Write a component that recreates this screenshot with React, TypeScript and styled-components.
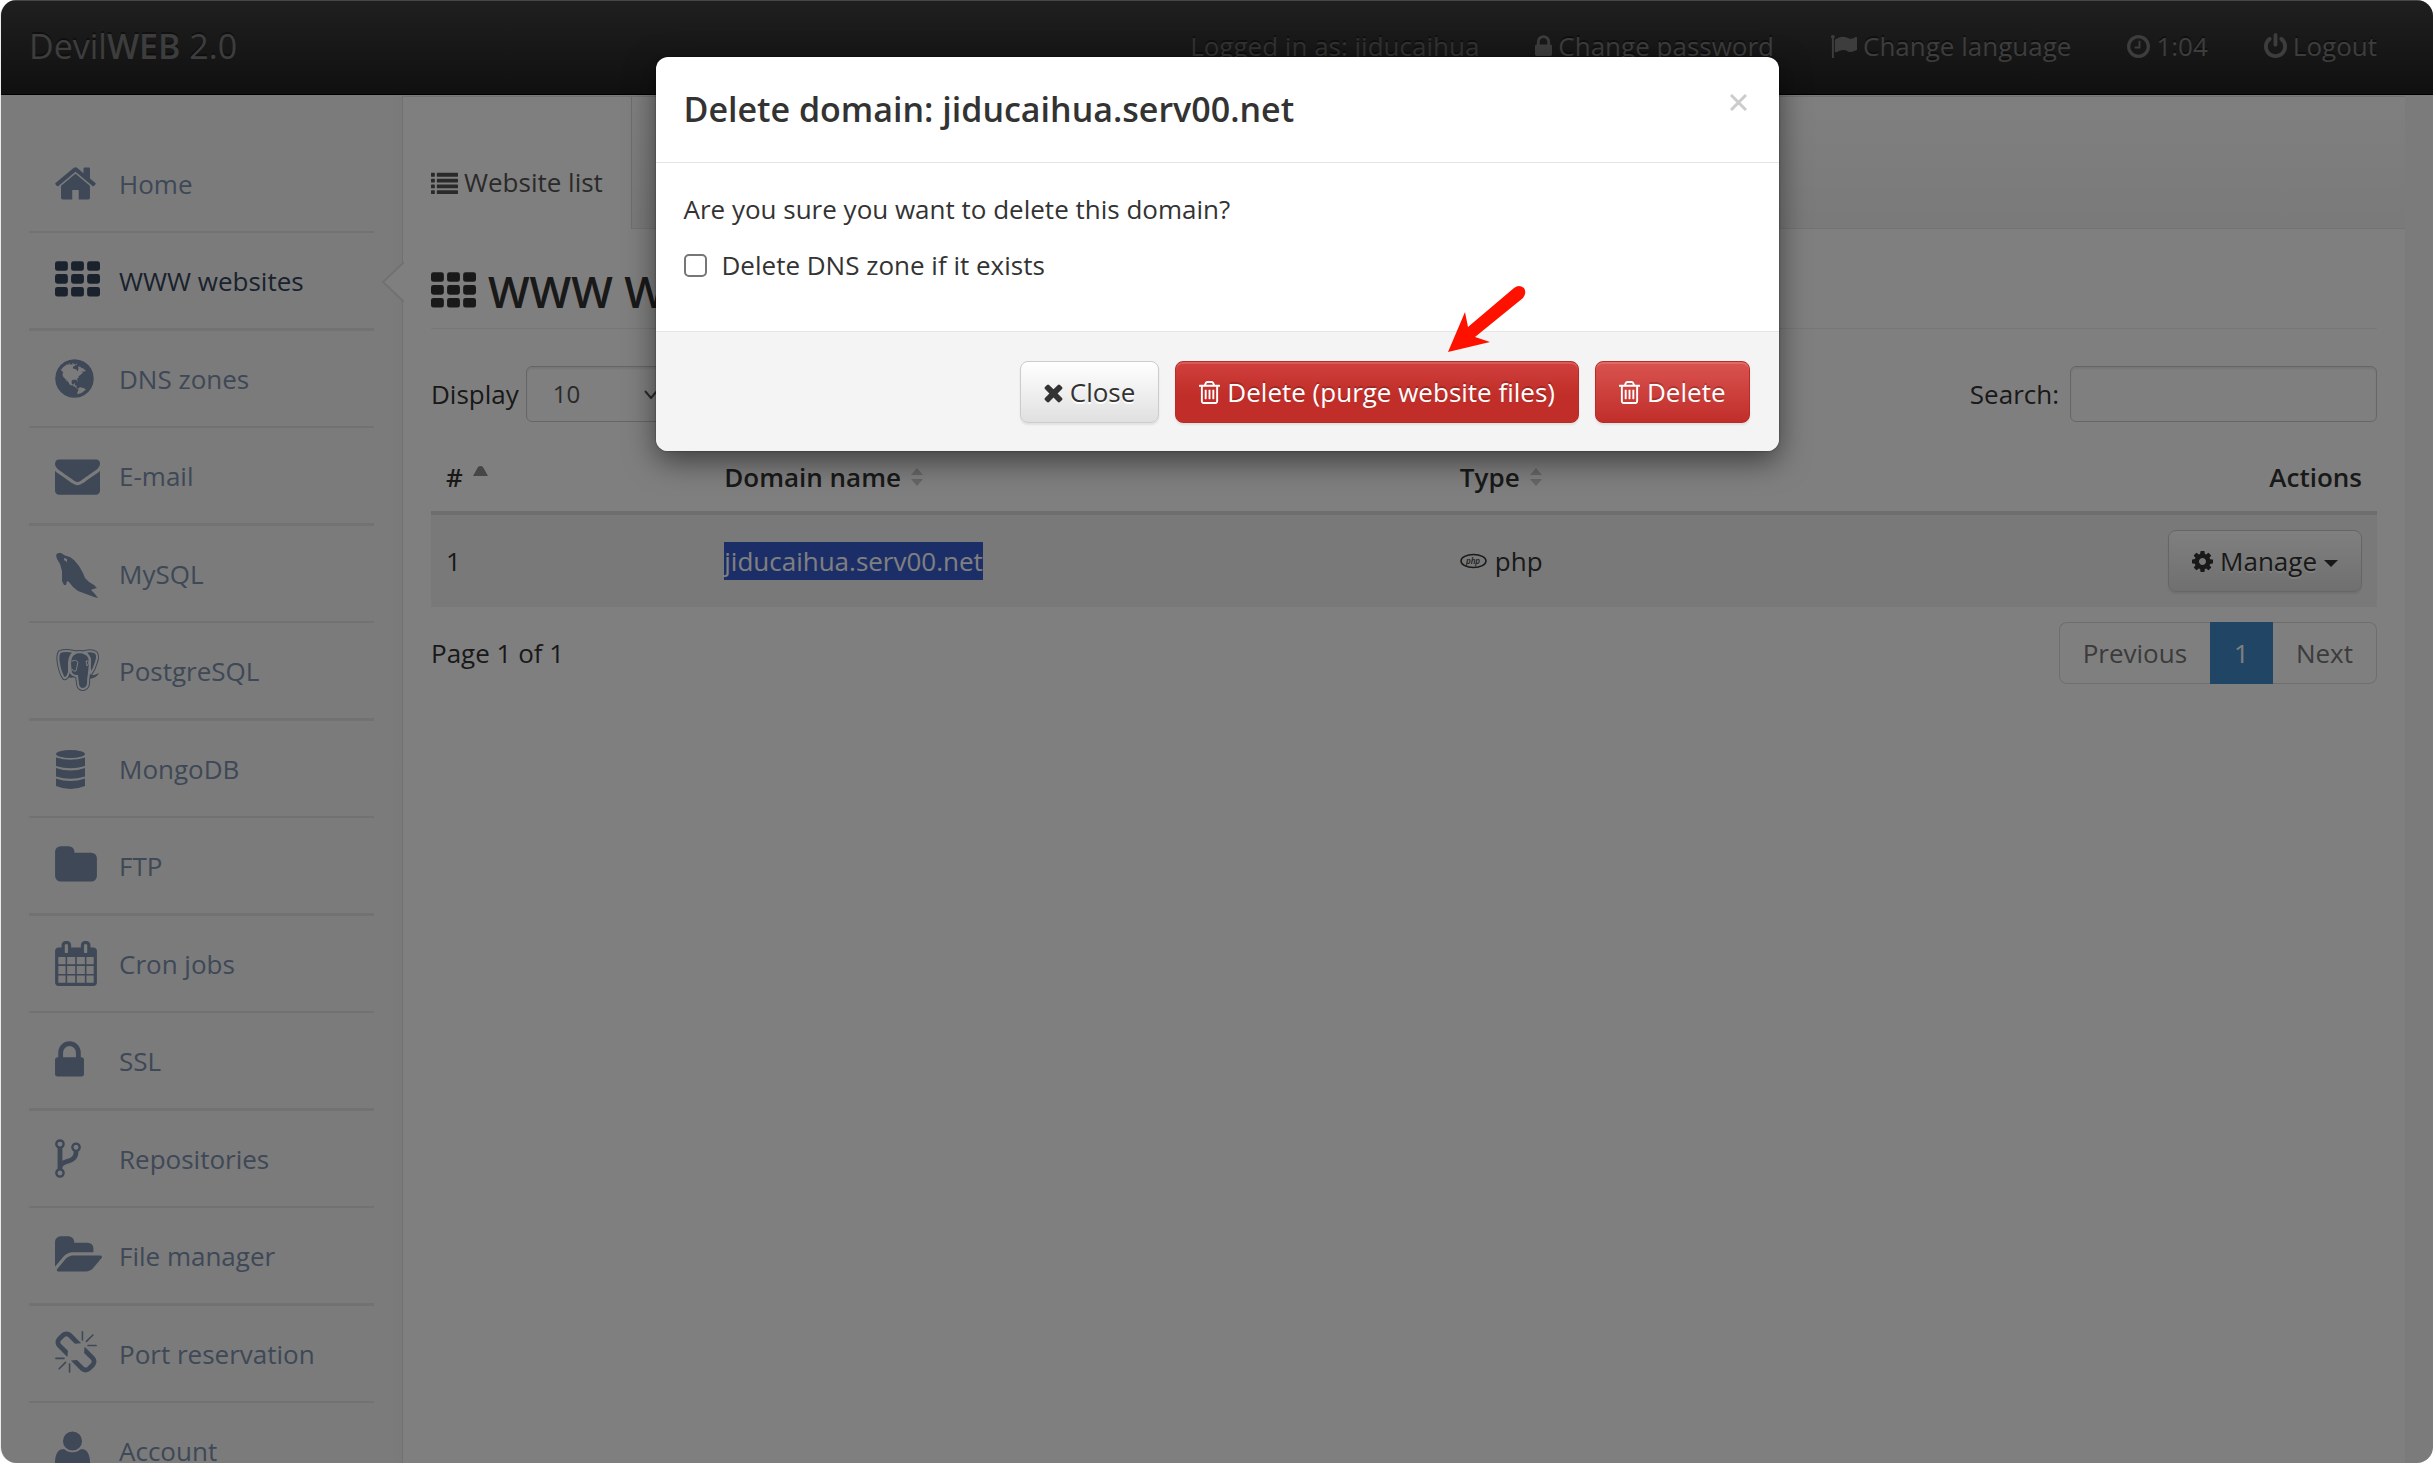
import React from "react";
import styled, { createGlobalStyle, css } from "styled-components";

const Global = createGlobalStyle`
  *, *::before, *::after { box-sizing: border-box; }
  html, body { margin: 0; height: 100%; background: #fff; }
  body, button, input, select {
    font-family: "Open Sans", "Noto Sans", sans-serif;
    font-size: 26px;
    line-height: 38px;
    color: #333;
  }
  #root { height: 100%; }
  a { color: inherit; text-decoration: none; }
`;

/* ---------- icons ---------- */

type IconDef = { x: number; w: number; d: string };

const bar = (x: number, y: number, w: number, h: number, r: number) =>
  `M${x + r} ${y}h${w - 2 * r}q${r} 0 ${r} ${r}v${h - 2 * r}q0 ${r}-${r} ${r}h-${w - 2 * r}q-${r} 0-${r}-${r}v-${h - 2 * r}q0-${r} ${r}-${r}z`;

const slot = "v576q0 14-9 23t-23 9h-64q-14 0-23-9t-9-23v-576q0-14 9-23t23-9h64q14 0 23 9t9 23z";

const glyphs: Record<string, IconDef> = {
  home: { x: 89, w: 1615, d: "M1472 992v480q0 26-19 45t-45 19h-384v-384h-256v384h-384q-26 0-45-19t-19-45v-480q0-1 .5-3t.5-3l575-474 575 474q1 2 1 6zm223-69l-62 74q-8 9-21 11h-3q-13 0-21-7l-692-577-692 577q-12 8-24 7-13-2-21-11l-62-74q-8-10-7-23.5t11-21.5l719-599q32-26 76-26t76 26l244 204v-195q0-14 9-23t23-9h192q14 0 23 9t9 23v408l219 182q10 8 11 21.5t-7 23.5z" },
  grid: { x: 0, w: 1792, d: [128, 640, 1152].map(y => [0, 640, 1280].map(x => bar(x, y, 512, 384, 96)).join("")).join("") },
  list: { x: 0, w: 1792, d: [256, 640, 1024, 1408].map(y => bar(0, y, 256, 256, 32) + bar(384, y, 1408, 256, 32)).join("") },
  globe: { x: 128, w: 1536, d: "M896 128q209 0 385.5 103t279.5 279.5 103 385.5-103 385.5-279.5 279.5-385.5 103-385.5-103-279.5-279.5-103-385.5 103-385.5 279.5-279.5 385.5-103zm274 521q-2 1-9.5 9.5t-13.5 9.5q2 0 4.5-5t5-11 3.5-7q6-7 22-15 14-6 52-12 34-8 51 11-2-2 9.5-13t14.5-12q3-2 15-4.5t15-7.5l2-22q-12 1-17.5-7t-6.5-21q0 2-6 8 0-7-4.5-8t-11.5 1-9 1q-10-3-15-7.5t-8-16.5-4-15q-2-5-9.5-11t-9.5-10q-1-2-2.5-5.5t-3-6.5-4-5.5-5.5-2.5-7 5-7.5 10-4.5 5q-3-2-6-1.5t-4.5 1-4.5 3-5 3.5q-3 2-8.5 3t-8.5 2q15-5-1-11-10-4-16-3 9-4 7.5-12t-8.5-14h5q-1-4-8.5-8.5t-17.5-8.5-13-6q-8-5-34-9.5t-33-.5q-5 6-4.5 10.5t4 14 3.5 12.5q1 6-5.5 13t-6.5 12q0 7 14 15.5t10 21.5q-3 8-16 16t-16 12q-5 8-1.5 18.5t10.5 16.5q2 2 1.5 4t-3.5 4.5-5.5 4-6.5 3.5l-3 2q-11 5-20.5-6t-13.5-26q-7-25-16-30-23-8-29 1-5-13-41-26-25-9-58-4 6-1 0-15-7-15-19-12 3-6 4-17.5t1-13.5q3-13 12-23 1-1 7-8.5t9.5-13.5.5-6q35 4 50-11 5-5 11.5-17t10.5-17q9-6 14-5.5t14.5 5.5 14.5 5q14 1 15.5-11t-7.5-20q12 1 3-17-4-7-8-9-12-4-27 5-8 4 2 8-1-1-9.5 10.5t-16.5 17.5-16-5q-1-1-5.5-13.5t-9.5-13.5q-8 0-16 15 3-8-11-15t-24-8q19-12-8-27-7-4-20.5-5t-19.5 4q-5 7-5.5 11.5t5 8 10.5 5.5 11.5 4 8.5 3q14 10 8 14-2 1-8.5 3.5t-11.5 4.5-6 4q-3 4 0 14t-2 14q-5-5-9-17.5t-7-16.5q7 9-25 6l-10-1q-4 0-16 2t-20.5 1-13.5-8q-4-8 0-20 1-4 4-2-4-3-11-9.5t-10-8.5q-46 15-94 41 6 1 12-1 5-2 13-6.5t10-5.5q34-14 42-7l5-5q14 16 20 25-7-4-30-1-20 6-22 12 7 12 5 18-4-3-11.5-10t-14.5-11-15-5q-16 0-22 1-146 80-235 222 7 7 12 8 4 1 5 9t2.5 11 11.5-3q9 8 3 19 1-1 44 27 19 17 21 21 3 11-10 18-1-2-9-9t-9-4q-3 5 .5 18.5t10.5 12.5q-7 0-9.5 16t-2.5 35.5-1 23.5l2 1q-3 12 5.5 34.5t21.5 19.5q-13 3 20 43 6 8 8 9 3 2 12 7.5t15 10 10 10.5q4 5 10 22.5t14 23.5q-2 6 9.5 20t10.5 23q-1 0-2.5 1t-2.5 1q3 7 15.5 14t15.5 13q1 3 2 10t3 11 8 2q2-20-24-62-15-25-17-29-3-5-5.5-15.5t-4.5-14.5q2 0 6 1.5t8.5 3.5 7.5 4 2 3q-3 7 2 17.5t12 18.5 17 19 12 13q6 6 14 19.5t0 13.5q9 0 20 10.5t17 19.5q5 8 8 26t5 24q2 7 8.5 13.5t12.5 9.5l16 8 13 7q5 2 18.5 10.5t21.5 11.5q10 4 16 4t14.5-2.5 13.5-3.5q15-2 29 15t21 21q36 19 55 11-2 1 .5 7.5t8 15.5 9 14.5 5.5 8.5q5 6 18 15t18 15q6-4 7-9-3 8 7 20t18 10q14-3 14-32-31 15-49-18 0-1-2.5-5.5t-4-8.5-2.5-8.5 0-7.5 5-3q9 0 10-3.5t-2-12.5-4-13q-1-8-11-20t-12-15q-5 9-16 8t-16-9q0 1-1.5 5.5t-1.5 6.5q-13 0-15-1 1-3 2.5-17.5t3.5-22.5q1-4 5.5-12t7.5-14.5 4-12.5-4.5-9.5-17.5-2.5q-19 1-26 20-1 3-3 10.5t-5 11.5-9 7q-7 3-24 2t-24-5q-13-8-22.5-29t-9.5-37q0-10 2.5-26.5t3-25-5.5-24.5q3-2 9-9.5t10-10.5q2-1 4.5-1.5t4.5 0 4-1.5 3-6q-1-1-4-3-3-3-4-3 7 3 28.5-1.5t27.5 1.5q15 11 22-2 0-1-2.5-9.5t-.5-13.5q5 27 29 9 3 3 15.5 5t17.5 5q3 2 7 5.5t5.5 4.5 5-.5 8.5-6.5q10 14 12 24 11 40 19 44 7 3 11 2t4.5-9.5 0-14-1.5-12.5l-1-8v-18l-1-8q-15-3-18.5-12t1.5-18.5 15-18.5q1-1 8-3.5t15.5-6.5 12.5-8q21-19 15-35 7 0 11-9-1 0-5-3t-7.5-5-4.5-2q9-5 2-16 5-3 7.5-11t7.5-10q9 12 21 2 7-8 1-16 5-7 20.5-10.5t18.5-9.5q7 2 8-2t1-12 3-12q4-5 15-9t13-5l17-11q3-4 0-4 18 2 31-11 10-11-6-20 3-6-3-9.5t-15-5.5q3-1 11.5-.5t10.5-1.5q15-10-7-16-17-5-43 12zm-163 877q206-36 351-189-3-3-12.5-4.5t-12.5-3.5q-18-7-24-8 1-7-2.5-13t-8-9-12.5-8-11-7q-2-2-7-6t-7-5.5-7.5-4.5-8.5-2-10 1l-3 1q-3 1-5.5 2.5t-5.5 3-4 3 0 2.5q-21-17-36-22-5-1-11-5.5t-10.5-7-10-1.5-11.5 7q-5 5-6 15t-2 13q-7-5 0-17.5t2-18.5q-3-6-10.5-4.5t-12 4.5-11.5 8.5-9 6.5-8.5 5.5-8.5 7.5q-3 4-6 12t-5 11q-2-4-11.5-6.5t-9.5-5.5q2 10 4 35t5 38q7 31-12 48-27 25-29 40-4 22 12 26 0 7-8 20.5t-7 21.5q0 6 2 16z" },
  mail: { x: 0, w: 1792, d: "M1792 710v794q0 66-47 113t-113 47h-1472q-66 0-113-47t-47-113v-794q44 49 101 87 362 246 497 345 57 42 92.500 65.500t94.500 48 110 24.500h2q51 0 110-24.500t94.500-48 92.500-65.500q170-123 498-345 57-39 100-87zm0-294q0 79-49 151t-122 123q-376 261-468 325-10 7-42.500 31t-54 38.500-52 32.500-57.500 27-50 9h-2q-23 0-50-9t-57.500-27-52-32.500-54-38.500-42.500-31q-91-64-262-182.500t-205-142.500q-62-42-117-115.500t-55-136.500q0-78 41.500-130t118.500-52h1472q65 0 112.500 47t47.500 113z" },
  folder: { x: 64, w: 1664, d: "M1728 608v704q0 92-66 158t-158 66h-1216q-92 0-158-66t-66-158v-960q0-92 66-158t158-66h320q92 0 158 66t66 158v32h672q92 0 158 66t66 158z" },
  calendar: { x: 64, w: 1664, d: "M192 1664h288v-288h-288v288zm352 0h320v-288h-320v288zm-352-352h288v-320h-288v320zm352 0h320v-320h-320v320zm-352-384h288v-288h-288v288zm736 736h320v-288h-320v288zm-384-736h320v-288h-320v288zm768 736h288v-288h-288v288zm-384-352h320v-320h-320v320zm-352-864v-288q0-13-9.500-22.500t-22.500-9.500h-64q-13 0-22.500 9.500t-9.500 22.500v288q0 13 9.500 22.500t22.500 9.500h64q13 0 22.500-9.500t9.500-22.500zm736 864h288v-320h-288v320zm-384-384h320v-288h-320v288zm384 0h288v-288h-288v288zm32-480v-288q0-13-9.500-22.500t-22.500-9.500h-64q-13 0-22.500 9.500t-9.500 22.500v288q0 13 9.500 22.500t22.500 9.500h64q13 0 22.500-9.500t9.500-22.500zm384-64v1280q0 52-38 90t-90 38h-1408q-52 0-90-38t-38-90v-1280q0-52 38-90t90-38h128v-96q0-66 47-113t113-47h64q66 0 113 47t47 113v96h384v-96q0-66 47-113t113-47h64q66 0 113 47t47 113v96h128q52 0 90 38t38 90z" },
  lock: { x: 320, w: 1152, d: "M640 768h512v-192q0-106-75-181t-181-75-181 75-75 181v192zm832 96v576q0 40-28 68t-68 28h-960q-40 0-68-28t-28-68v-576q0-40 28-68t68-28h32v-192q0-184 132-316t316-132 316 132 132 316v192h32q40 0 68 28t28 68z" },
  fork: { x: 384, w: 1024, d: "M672 1472q0-40-28-68t-68-28-68 28-28 68 28 68 68 28 68-28 28-68zm0-1152q0-40-28-68t-68-28-68 28-28 68 28 68 68 28 68-28 28-68zm640 128q0-40-28-68t-68-28-68 28-28 68 28 68 68 28 68-28 28-68zm96 0q0 52-26 96.500t-70 69.500q-2 287-226 414-67 38-203 81-128 40-169.500 71t-41.500 100v26q44 25 70 69.500t26 96.500q0 80-56 136t-136 56-136-56-56-136q0-52 26-96.500t70-69.500v-820q-44-25-70-69.500t-26-96.500q0-80 56-136t136-56 136 56 56 136q0 52-26 96.500t-70 69.500v497q54-26 154-57 55-17 87.500-29.500t70.500-31 59-39.500 40.500-51 28-69.500 8.500-91.500q-44-25-70-69.500t-26-96.500q0-80 56-136t136-56 136 56 56 136z" },
  folderOpen: { x: -64, w: 1880, d: "M1815 952q0 31-31 66l-336 396q-43 51-120.500 86.500t-143.500 35.500h-1088q-34 0-60.500-13t-26.500-43q0-31 31-66l336-396q43-51 120.500-86.500t143.500-35.500h1088q34 0 60.500 13t26.500 43zm-343-344v160h-832q-94 0-197 47.500t-164 119.500l-337 396-5 6q0-4-.5-12.500t-.5-12.500v-960q0-92 66-158t158-66h320q92 0 158 66t66 158v32h544q92 0 158 66t66 158z" },
  unlink: { x: 64, w: 1664, d: "M503 1271l-256 256q-10 9-23 9-12 0-23-9-9-10-9-23t9-23l256-256q10-9 23-9t23 9q9 10 9 23t-9 23zm169 41v320q0 14-9 23t-23 9-23-9-9-23v-320q0-14 9-23t23-9 23 9 9 23zm-224-224q0 14-9 23t-23 9h-320q-14 0-23-9t-9-23 9-23 23-9h320q14 0 23 9t9 23zm1264 128q0 120-85 203l-147 146q-83 83-203 83-121 0-204-85l-334-335q-21-21-42-56l239-18 273 274q28 28 68 28.500t68-27.500l147-146q28-28 28-67 0-40-28-68l-274-275 18-239q35 21 56 42l336 336q84 86 84 204zm-617-724l-239 18-273-274q-28-28-68-28-39 0-68 27l-147 146q-28 28-28 67 0 40 28 68l274 274-18 240q-35-21-56-42l-336-336q-84-86-84-204 0-120 85-203l147-146q83-83 203-83 121 0 204 85l334 335q21 21 42 56zm633 84q0 14-9 23t-23 9h-320q-14 0-23-9t-9-23 9-23 23-9h320q14 0 23 9t9 23zm-544-544v320q0 14-9 23t-23 9-23-9-9-23v-320q0-14 9-23t23-9 23 9 9 23zm407 151l-256 256q-11 9-23 9t-23-9q-9-10-9-23t9-23l256-256q10-9 23-9t23 9q9 10 9 23t-9 23z" },
  user: { x: 192, w: 1408, d: "M1600 1405q0 120-73 189.500t-194 69.500h-874q-121 0-194-69.500t-73-189.500q0-53 3.500-103.500t14-109 26.500-108.500 43-97.500 62-81 85.500-53.500 111.500-20q9 0 42 21.500t74.500 48 108 48 133.500 21.500 133.500-21.500 108-48 74.500-48 42-21.500q61 0 111.500 20t85.500 53.500 62 81 43 97.500 26.500 108.500 14 109 3.500 103.500zm-320-893q0 159-112.500 271.500t-271.500 112.500-271.500-112.500-112.500-271.500 112.500-271.500 271.500-112.500 271.500 112.500 112.500 271.500z" },
  flag: { x: 0, w: 1792, d: "M320 256q0 72-64 110v1266q0 13-9.500 22.500t-22.500 9.500h-64q-13 0-22.500-9.500t-9.500-22.500v-1266q-64-38-64-110 0-53 37.500-90.500t90.500-37.500 90.500 37.500 37.500 90.500zm1472 64v763q0 25-12.500 38.500t-39.500 27.500q-215 116-369 116-61 0-123.500-22t-108.500-48-115.500-48-142.500-22q-192 0-464 146-17 9-33 9-26 0-45-19t-19-45v-742q0-32 31-55 21-14 79-43 236-120 421-120 107 0 200 29t219 88q38 19 88 19 54 0 117.500-21t110-47 88-47 54.500-21q26 0 45 19t19 45z" },
  clock: { x: 128, w: 1536, d: "M1024 544v448q0 14-9 23t-23 9h-320q-14 0-23-9t-9-23v-64q0-14 9-23t23-9h224v-352q0-14 9-23t23-9h64q14 0 23 9t9 23zm416 352q0-148-73-273t-198-198-273-73-273 73-198 198-73 273 73 273 198 198 273 73 273-73 198-198 73-273zm224 0q0 209-103 385.500t-279.500 279.500-385.500 103-385.500-103-279.500-279.500-103-385.500 103-385.500 279.500-279.500 385.500-103 385.500 103 279.500 279.500 103 385.500z" },
  power: { x: 128, w: 1536, d: "M1664 896q0 156-61 298t-164 245-245 164-298 61-298-61-245-164-164-245-61-298q0-182 80.500-343t226.500-270q43-32 95.500-25t83.500 50q32 42 24.500 94.500t-49.500 84.500q-98 74-151.500 181t-53.500 228q0 104 40.500 198.500t109.500 163.500 163.500 109.500 198.500 40.500 198.500-40.500 163.500-109.500 109.500-163.500 40.500-198.500q0-121-53.500-228t-151.500-181q-42-32-49.500-84.500t24.500-94.500q31-43 84-50t95 25q146 109 226.500 270t80.500 343zm-640-768v640q0 52-38 90t-90 38-90-38-38-90v-640q0-52 38-90t90-38 90 38 38 90z" },
  times: { x: 270, w: 1252, d: "M1490 1322q0 40-28 68l-136 136q-28 28-68 28t-68-28l-294-294-294 294q-28 28-68 28t-68-28l-136-136q-28-28-28-68t28-68l294-294-294-294q-28-28-28-68t28-68l136-136q28-28 68-28t68 28l294 294 294-294q28-28 68-28t68 28l136 136q28 28 28 68t-28 68l-294 294 294 294q28 28 28 68z" },
  trash: { x: 192, w: 1408, d: `M704 736${slot}M960 736${slot}M1216 736${slot}M1344 1460v-948h-896v948q0 22 7 40.500t14.500 27 10.500 8.500h832q3 0 10.500-8.500t14.500-27 7-40.500zm-672-1076h448l-48-117q-7-9-17-11h-317q-10 2-17 11zm928 32v64q0 14-9 23t-23 9h-96v948q0 83-47 143.500t-113 60.500h-832q-66 0-113-58.500t-47-141.500v-952h-96q-14 0-23-9t-9-23v-64q0-14 9-23t23-9h309l70-167q15-37 54-63t79-26h320q40 0 79 26t54 63l70 167h309q14 0 23 9t9 23z` },
  cog: { x: 128, w: 1536, d: "M1152 896q0-106-75-181t-181-75-181 75-75 181 75 181 181 75 181-75 75-181zm512-109v222q0 12-8 23t-20 13l-185 28q-19 54-39 91 35 50 107 138 10 12 10 25t-9 23q-27 37-99 108t-94 71q-12 0-26-9l-138-108q-44 23-91 38-16 136-29 186-7 28-36 28h-222q-14 0-24.500-8.500t-11.500-21.500l-28-184q-49-16-90-37l-141 107q-10 9-25 9-14 0-25-11-126-114-165-168-7-10-7-23 0-12 8-23 15-21 51-66.500t54-70.500q-27-50-41-99l-183-27q-13-2-21-12.500t-8-23.500v-222q0-12 8-23t19-13l186-28q14-46 39-92-40-57-107-138-10-12-10-24 0-10 9-23 26-36 98.500-107.500t94.500-71.500q13 0 26 10l138 107q44-23 91-38 16-136 29-186 7-28 36-28h222q14 0 24.500 8.500t11.500 21.500l28 184q49 16 90 37l142-107q9-9 24-9 13 0 25 10 129 119 165 170 7 8 7 22 0 12-8 23-15 21-51 66.500t-54 70.500q26 50 41 98l183 28q13 2 21 12.500t8 23.500z" },
};

const Svg = styled.svg`
  display: block;
  flex: none;
  fill: currentColor;
`;

function Glyph({ name, size = 27 }: { name: string; size?: number }) {
  const g = glyphs[name];
  return (
    <Svg aria-hidden="true" height={size} width={Math.round((g.w * size) / 1792)} viewBox={`${g.x} 0 ${g.w} 1792`}>
      <path d={g.d} />
    </Svg>
  );
}

const Dolphin = () => (
  <Svg aria-hidden="true" width="45" height="48" viewBox="-1 -3 45 48">
    <path fillRule="evenodd" d="M0 2 2 0 5 0 9 2.500 14 4 18 7 23 13 27 20 29 25 33 29 38 32 41 35 37 36 35 37 39 41 42 45 38 44 30 41 22 38 17 34 13 29 11 28 10 32 8 32 6 28 6 18 4 11 1 6ZM8 5 8 7 11 9 11 6Z" />
  </Svg>
);

const Elephant = () => {
  const parts = [
    "M4 3Q9 1 18 3Q13 7 13 14L13 23Q11 30 8 29Q4 23 2.500 12Q2 5 4 3Z",
    "M29 3Q36 1 40 4Q42 7 40 13Q38 20 35 24Q33 20 34 12Q34 7 29 3Z",
    "M14 15Q14 3 24 3Q34 4 34 13L33 24Q32 30 32 35Q31 40 26 40Q22 39 22 34L21 27Q17 27 15 24Z",
  ];
  return (
    <Svg aria-hidden="true" width="45" height="45" viewBox="-1 -1 45 45">
      <path d="M31 25Q36 28 43 24Q41 29 33 30ZM22 27Q16 30 10 28L15 24Z" />
      {parts.map(d => <path key={d} d={d} fill="none" stroke="currentColor" strokeWidth="4" />)}
      {parts.map(d => <path key={d} d={d} stroke="#f7f7f7" strokeWidth="2" />)}
      <path d="M16 12Q20 10 22 13L20 22Q17 23 16 20M30 12Q33 11 33 14L31 17Z" fill="none" stroke="#f7f7f7" strokeWidth="1" />
    </Svg>
  );
};

const Database = () => (
  <Svg aria-hidden="true" width="30" height="41" viewBox="-1 -2 30 41">
    <ellipse cx="14.500" cy="4" rx="14.500" ry="4" />
    <path d="M0 7.500Q14.500 12 29 7.500V16Q14.500 20.500 0 16ZM0 18Q14.500 23 29 18V26.500Q14.500 31 0 26.500ZM0 28.500Q14.500 33.500 29 28.500V36Q14.500 42 0 36Z" />
  </Svg>
);

const Php = () => (
  <Svg aria-hidden="true" width="27" height="16" viewBox="0 0 27 16">
    <ellipse cx="13.500" cy="8" rx="12.500" ry="6.500" fill="none" stroke="currentColor" strokeWidth="1.500" />
    <text x="13" y="11" textAnchor="middle" fontSize="8" fontStyle="italic" fontWeight="600">php</text>
  </Svg>
);

/* ---------- page frame ---------- */

const Shell = styled.div`
  position: relative;
  height: 100vh;
  overflow: hidden;
  border: solid #e9ebee;
  border-width: 0 0 0 1px;
  border-radius: 16px;
  background: #f7f7f7;
  display: flex;
  flex-direction: column;
`;

const TopBar = styled.header`
  flex: none;
  height: 95px;
  padding: 0 28px 3px;
  display: flex;
  align-items: center;
  justify-content: space-between;
  background: linear-gradient(#3f3f3f, #202020);
  border-top: 1px solid #8c8c8c;
  border-bottom: 1px solid #000;
  color: #7a7a7a;
  text-shadow: 0 -2px 0 rgba(0, 0, 0, 0.4);
`;

const Brand = styled.a`
  font-size: 34px;
  line-height: 48px;
  b { font-weight: 600; }
`;

const TopNav = styled.nav`
  display: flex;
  gap: 56px;
  padding-right: 28px;
`;

const topItem = css`
  display: flex;
  align-items: center;
  gap: 6px;
`;
const TopLink = styled.a`${topItem}`;
const TopText = styled.span`${topItem} color: #646464;`;

const Columns = styled.div`
  flex: 1;
  min-height: 0;
  display: flex;
  padding-right: 28px;
`;

const Sidebar = styled.nav`
  flex: none;
  width: 401px;
  padding: 41px 28px 0;
  background: linear-gradient(to right, #f7f7f7 96%, #f4f4f4);
`;

const Menu = styled.ul`
  list-style: none;
  margin: 0;
  padding: 0;
`;

const MenuItem = styled.li`
  position: relative;
  height: 97px;
  border-bottom: 2px solid #e4e4e4;
  &:nth-child(even) {
    height: 98px;
    border-bottom-width: 3px;
  }
`;

const MenuLink = styled.a<{ $active?: boolean }>`
  height: 100%;
  padding-left: 26px;
  display: flex;
  align-items: center;
  color: ${p => (p.$active ? "#34445a" : "#7c90ae")};
`;

const IconSlot = styled.span`
  flex: none;
  width: 64px;
  display: flex;
`;

const Notch = styled.svg`
  position: absolute;
  right: -30px;
  top: 50%;
  width: 23px;
  height: 42px;
  margin-top: -20px;
  fill: #fff;
  stroke: #dfe3e6;
  stroke-width: 2;
`;

const Content = styled.main`
  flex: 1;
  min-width: 0;
  margin-top: 1px;
  background: #fff;
  border-left: 1px solid #e2e2e2;
  border-top: 1px solid #e2e2e2;
`;

const Tabs = styled.div`
  display: flex;
  height: 132px;
  border-bottom: 1px solid #e6e6e6;
  background: linear-gradient(#fff, #f4f4f4);
`;

const Tab = styled.a`
  height: 132px;
  padding: 38px 28px 0;
  display: flex;
  align-items: center;
  gap: 6px;
  border-right: 1px solid #ddd;
  background: #fff;
  color: #555;
`;

const Body = styled.div`
  padding: 29px 28px 0;
`;

const PageTitle = styled.h1`
  margin: 0 0 37px;
  padding-bottom: 4px;
  display: flex;
  align-items: center;
  gap: 12px;
  font-size: 44px;
  line-height: 66px;
  font-weight: 600;
  border-bottom: 1px solid #eee;
`;

const Between = styled.div<{ $top?: number }>`
  display: flex;
  align-items: center;
  justify-content: space-between;
  margin-top: ${p => p.$top ?? 0}px;
`;

const Field = styled.label<{ $gap: number }>`
  display: flex;
  align-items: center;
  gap: ${p => p.$gap}px;
`;

const control = css`
  height: 56px;
  border: 1px solid #ccc;
  border-radius: 6px;
  background: #fff;
  box-shadow: inset 0 2px 2px rgba(0, 0, 0, 0.075);
`;

const SelectWrap = styled.span`
  display: grid;
  align-items: center;
  > * { grid-area: 1 / 1; }
  > svg {
    justify-self: end;
    margin-right: 14px;
    pointer-events: none;
  }
`;

const Select = styled.select`
  ${control}
  width: 146px;
  padding: 0 26px;
  appearance: none;
  font-size: 24px;
  color: #555;
`;

const SearchInput = styled.input`
  ${control}
  width: 307px;
  padding: 0 20px;
`;

const Table = styled.table`
  width: 100%;
  margin-top: 30px;
  border-collapse: collapse;
  table-layout: fixed;
`;

const Th = styled.th<{ $width?: string; $right?: boolean }>`
  width: ${p => p.$width ?? "auto"};
  height: 61px;
  padding: 0 15px 10px;
  font-weight: 600;
  text-align: ${p => (p.$right ? "right" : "left")};
  border-bottom: 4px solid #ddd;
`;

const Td = styled.td<{ $right?: boolean }>`
  padding: 15px;
  background: #f3f3f3;
  text-align: ${p => (p.$right ? "right" : "left")};
`;

const Inline = styled.span<{ $gap: number }>`
  display: inline-flex;
  align-items: center;
  vertical-align: top;
  gap: ${p => p.$gap}px;
`;

const Selected = styled.a`
  display: inline-block;
  vertical-align: top;
  background: #385cd0;
  color: #fff;
`;

const Button = styled.button<{ $tone?: "danger" | "dangerActive" }>`
  height: 62px;
  padding: 0 23px;
  display: inline-flex;
  align-items: center;
  gap: 7px;
  vertical-align: top;
  border-radius: 8px;
  border: 1px solid #ccc;
  background: linear-gradient(#fff, #e0e0e0);
  box-shadow: inset 0 2px 0 rgba(255, 255, 255, 0.15), 0 2px 2px rgba(0, 0, 0, 0.08);
  text-shadow: 0 2px 0 #fff;
  ${p => p.$tone && css`
    color: #fff;
    border-color: #b92c28;
    text-shadow: 0 -2px 0 rgba(0, 0, 0, 0.2);
    background: ${p.$tone === "danger" ? "linear-gradient(#d9534f, #c12e2a)" : "linear-gradient(#d0403c, #c12e2a 55%)"};
  `}
`;

const Caret = styled.span`
  border: 7px solid transparent;
  border-top-color: currentColor;
  border-bottom: 0;
  margin-top: 5px;
`;

const Pager = styled.div`
  display: flex;
`;

const PageButton = styled.button<{ $edge?: "left" | "right"; $current?: boolean }>`
  height: 62px;
  padding: 0 23px;
  border: 1px solid #ddd;
  background: #fff;
  color: #777;
  ${p => p.$edge === "left" && "border-right: 0; border-radius: 8px 0 0 8px;"}
  ${p => p.$edge === "right" && "border-left: 0; border-radius: 0 8px 8px 0;"}
  ${p => p.$current && "background: #428bca; border-color: #428bca; color: #fff;"}
`;

/* ---------- dialog ---------- */

const Backdrop = styled.div`
  position: absolute;
  inset: 0;
  padding-top: 57px;
  display: flex;
  justify-content: center;
  align-items: flex-start;
  background: rgba(0, 0, 0, 0.5);
`;

const Dialog = styled.section`
  position: relative;
  width: 100%;
  max-width: 1123px;
  overflow: visible;
  border-radius: 12px;
  background: #fff;
  box-shadow: 0 10px 30px rgba(0, 0, 0, 0.5), 0 0 2px rgba(0, 0, 0, 0.5);
`;

const DialogHead = styled.div`
  height: 106px;
  padding: 27px 28px 0;
  display: flex;
  justify-content: space-between;
  align-items: flex-start;
  border-bottom: 1px solid #e5e5e5;
`;

const DialogTitle = styled.h2`
  margin: 0;
  font-size: 34px;
  line-height: 50px;
  font-weight: 600;
`;

const CloseX = styled.button`
  padding: 10px 4px;
  border: 0;
  background: none;
  color: #ccc;
  svg { display: block; }
`;

const DialogBody = styled.div`
  height: 168px;
  padding: 27px 28px;
  display: flex;
  flex-direction: column;
  gap: 18px;
`;

const Question = styled.p`margin: 0;`;

const Tick = styled.input`
  width: 23px;
  height: 23px;
  margin: 0;
  appearance: none;
  border: 2px solid #767676;
  border-radius: 5px;
  background: #fff;
  &:checked { background: #428bca; }
`;

const DialogFoot = styled.div`
  display: flex;
  justify-content: flex-end;
  gap: 16px;
  padding: 29px 29px 28px;
  border-top: 1px solid #e5e5e5;
  border-radius: 0 0 12px 12px;
  background: #f4f4f4;
`;

const Pointer = styled.svg`
  position: absolute;
  left: 790px;
  top: 226px;
  fill: #ff1100;
`;

const menu: { label: string; icon: React.ReactNode; active?: boolean }[] = [
  { label: "Home", icon: <Glyph name="home" size={45} /> },
  { label: "WWW websites", icon: <Glyph name="grid" size={45} />, active: true },
  { label: "DNS zones", icon: <Glyph name="globe" size={45} /> },
  { label: "E-mail", icon: <Glyph name="mail" size={45} /> },
  { label: "MySQL", icon: <Dolphin /> },
  { label: "PostgreSQL", icon: <Elephant /> },
  { label: "MongoDB", icon: <Database /> },
  { label: "FTP", icon: <Glyph name="folder" size={45} /> },
  { label: "Cron jobs", icon: <Glyph name="calendar" size={45} /> },
  { label: "SSL", icon: <Glyph name="lock" size={45} /> },
  { label: "Repositories", icon: <Glyph name="fork" size={45} /> },
  { label: "File manager", icon: <Glyph name="folderOpen" size={45} /> },
  { label: "Port reservation", icon: <Glyph name="unlink" size={45} /> },
  { label: "Account", icon: <Glyph name="user" size={45} /> },
];

const SortBoth = () => (
  <Svg aria-hidden="true" width="12" height="18" viewBox="0 0 12 18" color="#ccc">
    <path d="M0 7 6 0 12 7ZM0 11H12L6 18Z" />
  </Svg>
);

const SortUp = () => (
  <Svg aria-hidden="true" width="15" height="22" viewBox="0 0 15 22" color="#8c8c8c">
    <path d="M0 10 5 1Q7.500-1 10 1L15 10Z" />
  </Svg>
);

export default function App() {
  return (
    <Shell>
      <Global />
      <TopBar>
        <Brand href="#">Devil<b>WEB</b> 2.0</Brand>
        <TopNav aria-label="Session">
          <TopText>Logged in as: jiducaihua</TopText>
          <TopLink href="#password"><Glyph name="lock" />Change password</TopLink>
          <TopLink href="#language"><Glyph name="flag" />Change language</TopLink>
          <TopLink href="#session"><Glyph name="clock" />1:04</TopLink>
          <TopLink href="#logout"><Glyph name="power" />Logout</TopLink>
        </TopNav>
      </TopBar>

      <Columns>
        <Sidebar aria-label="Main">
          <Menu>
            {menu.map(m => (
              <MenuItem key={m.label}>
                <MenuLink href={`#${m.label}`} $active={m.active}>
                  <IconSlot>{m.icon}</IconSlot>
                  {m.label}
                </MenuLink>
                {m.active && (
                  <Notch viewBox="0 0 23 42" aria-hidden="true">
                    <path d="M23 1 2 21 23 41" />
                  </Notch>
                )}
              </MenuItem>
            ))}
          </Menu>
        </Sidebar>

        <Content>
          <Tabs>
            <Tab href="#list"><Glyph name="list" />Website list</Tab>
          </Tabs>
          <Body>
            <PageTitle><Glyph name="grid" size={45} />WWW Websites</PageTitle>
            <Between>
              <Field $gap={7}>
                Display
                <SelectWrap>
                  <Select defaultValue="10">
                    <option>10</option>
                    <option>25</option>
                    <option>50</option>
                  </Select>
                  <svg width="14" height="9" viewBox="0 0 14 9" fill="none" stroke="#555" strokeWidth="2">
                    <path d="M1 1 7 8 13 1" />
                  </svg>
                </SelectWrap>
              </Field>
              <Field $gap={11}>
                Search:
                <SearchInput type="search" />
              </Field>
            </Between>

            <Table>
              <thead>
                <tr>
                  <Th $width="14.3%"><Inline $gap={10}># <SortUp /></Inline></Th>
                  <Th $width="37.8%"><Inline $gap={10}>Domain name <SortBoth /></Inline></Th>
                  <Th><Inline $gap={10}>Type <SortBoth /></Inline></Th>
                  <Th $right>Actions</Th>
                </tr>
              </thead>
              <tbody>
                <tr>
                  <Td>1</Td>
                  <Td><Selected href="#domain">jiducaihua.serv00.net</Selected></Td>
                  <Td><Inline $gap={8}><Php />php</Inline></Td>
                  <Td $right>
                    <Button type="button"><Glyph name="cog" size={25} />Manage<Caret /></Button>
                  </Td>
                </tr>
              </tbody>
            </Table>

            <Between $top={15}>
              <span>Page 1 of 1</span>
              <Pager>
                <PageButton type="button" $edge="left">Previous</PageButton>
                <PageButton type="button" $current>1</PageButton>
                <PageButton type="button" $edge="right">Next</PageButton>
              </Pager>
            </Between>
          </Body>
        </Content>
      </Columns>

      <Backdrop>
        <Dialog role="dialog" aria-modal="true" aria-labelledby="dialog-title">
          <DialogHead>
            <DialogTitle id="dialog-title">Delete domain: jiducaihua.serv00.net</DialogTitle>
            <CloseX type="button" aria-label="Close dialog">
              <svg width="17" height="17" viewBox="0 0 17 17" fill="none" stroke="currentColor" strokeWidth="3">
                <path d="M1 1 16 16M16 1 1 16" />
              </svg>
            </CloseX>
          </DialogHead>
          <DialogBody>
            <Question>Are you sure you want to delete this domain?</Question>
            <Field $gap={15}><Tick type="checkbox" />Delete DNS zone if it exists</Field>
          </DialogBody>
          <DialogFoot>
            <Button type="button"><Glyph name="times" />Close</Button>
            <Button type="button" $tone="dangerActive"><Glyph name="trash" />Delete (purge website files)</Button>
            <Button type="button" $tone="danger"><Glyph name="trash" />Delete</Button>
          </DialogFoot>
          <Pointer width="84" height="72" viewBox="0 0 84 72" aria-hidden="true">
            <path d="M2 69 19 29 22 44 68 5Q73 1 78 5Q81 10 77 15L29 54 44 59Z" />
          </Pointer>
        </Dialog>
      </Backdrop>
    </Shell>
  );
}
